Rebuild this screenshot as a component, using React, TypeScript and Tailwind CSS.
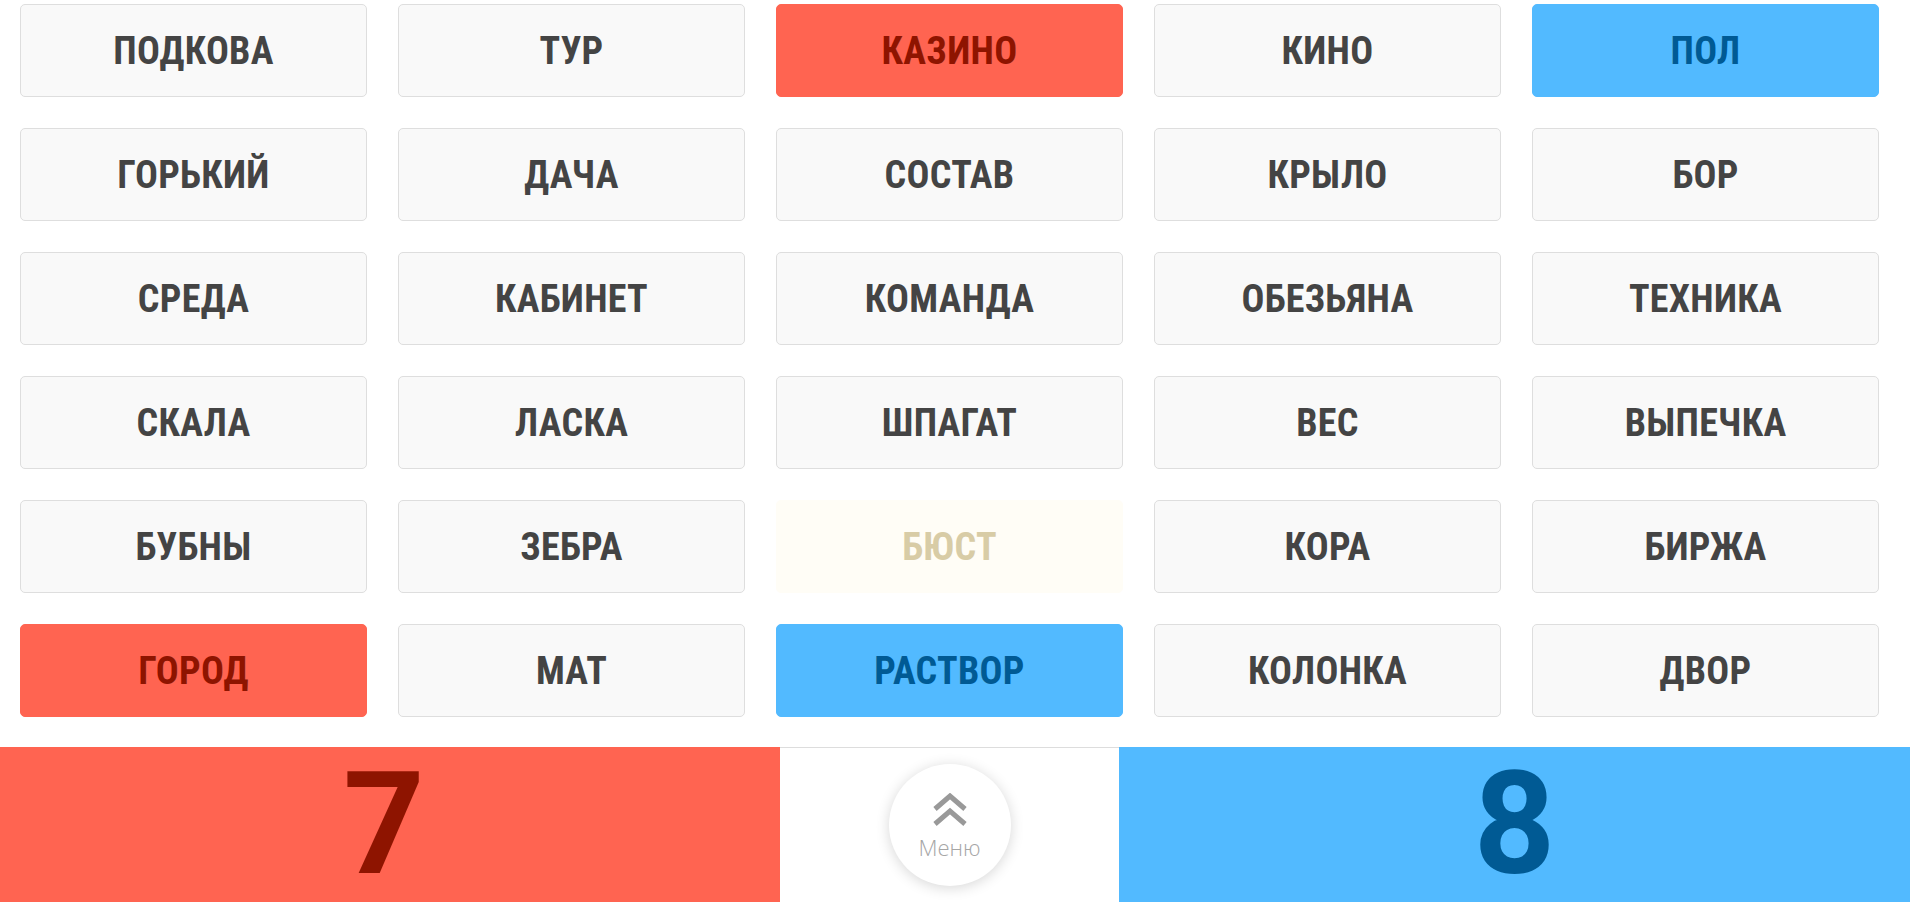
type Tone = 'plain' | 'red' | 'blue' | 'beige';

interface Word {
  text: string;
  tone: Tone;
}

const words: Word[] = [
  { text: 'ПОДКОВА', tone: 'plain' },
  { text: 'ТУР', tone: 'plain' },
  { text: 'КАЗИНО', tone: 'red' },
  { text: 'КИНО', tone: 'plain' },
  { text: 'ПОЛ', tone: 'blue' },
  { text: 'ГОРЬКИЙ', tone: 'plain' },
  { text: 'ДАЧА', tone: 'plain' },
  { text: 'СОСТАВ', tone: 'plain' },
  { text: 'КРЫЛО', tone: 'plain' },
  { text: 'БОР', tone: 'plain' },
  { text: 'СРЕДА', tone: 'plain' },
  { text: 'КАБИНЕТ', tone: 'plain' },
  { text: 'КОМАНДА', tone: 'plain' },
  { text: 'ОБЕЗЬЯНА', tone: 'plain' },
  { text: 'ТЕХНИКА', tone: 'plain' },
  { text: 'СКАЛА', tone: 'plain' },
  { text: 'ЛАСКА', tone: 'plain' },
  { text: 'ШПАГАТ', tone: 'plain' },
  { text: 'ВЕС', tone: 'plain' },
  { text: 'ВЫПЕЧКА', tone: 'plain' },
  { text: 'БУБНЫ', tone: 'plain' },
  { text: 'ЗЕБРА', tone: 'plain' },
  { text: 'БЮСТ', tone: 'beige' },
  { text: 'КОРА', tone: 'plain' },
  { text: 'БИРЖА', tone: 'plain' },
  { text: 'ГОРОД', tone: 'red' },
  { text: 'МАТ', tone: 'plain' },
  { text: 'РАСТВОР', tone: 'blue' },
  { text: 'КОЛОНКА', tone: 'plain' },
  { text: 'ДВОР', tone: 'plain' },
];

const toneClass: Record<Tone, string> = {
  plain: 'bg-[#f9f9f9] border-[#dedede] text-[#444444]',
  red: 'bg-[#ff6451] border-[#ff6451] text-[#8e1400]',
  blue: 'bg-[#52baff] border-[#52baff] text-[#005a94]',
  beige: 'bg-[#fffdf6] border-[#fffdf6] text-[#d8cca6]',
};

function Card({ word }: { word: Word }) {
  return (
    <button
      className={`h-[93px] w-full rounded-[5px] border flex items-center justify-center text-[38px] font-bold font-stretch-condensed tracking-[0.3px] leading-none ${toneClass[word.tone]}`}
      style={{ fontFamily: '"Roboto Condensed", Roboto, "Liberation Sans", sans-serif' }}
    >
      {word.text}
    </button>
  );
}

function MenuButton() {
  return (
    <button className="w-[122px] h-[122px] rounded-full bg-white shadow-[0_2px_14px_rgba(0,0,0,0.16)] flex flex-col items-center justify-center">
      <svg width="36" height="34" viewBox="0 0 36 34" fill="none" stroke="#999999" strokeWidth="5" strokeLinecap="butt" strokeLinejoin="miter" className="mt-[6px]">
        <polyline points="3,16 18,3 33,16" />
        <polyline points="3,31 18,18 33,31" />
      </svg>
      <span
        className="text-[22px] font-light text-[#a6a6a6] leading-none mt-[9px] mb-[6px]"
        style={{ fontFamily: '"Open Sans", Roboto, sans-serif' }}
      >
        Меню
      </span>
    </button>
  );
}

export default function App() {
  return (
    <div className="w-[1910px] h-[902px] bg-white flex flex-col overflow-hidden">
      <div className="h-[747px] pt-[4px] pl-[20px]">
        <div className="grid grid-cols-[repeat(5,347px)] gap-x-[31px] gap-y-[31px]">
          {words.map((w) => (
            <Card key={w.text} word={w} />
          ))}
        </div>
      </div>

      {/* Счёт */}
      <div className="h-[155px] flex">
        <div className="w-[780px] bg-[#ff6451] flex items-center justify-center">
          <span className="text-[142px] font-bold leading-[150px] text-[#8e1400] mr-[12px]" style={{ fontFamily: 'Roboto, sans-serif' }}>
            7
          </span>
        </div>
        <div className="w-[339px] border-t border-[#dddddd] flex items-center justify-center">
          <MenuButton />
        </div>
        <div className="flex-1 bg-[#52baff] flex items-center justify-center">
          <span className="text-[142px] font-bold leading-[150px] text-[#005a94]" style={{ fontFamily: 'Roboto, sans-serif' }}>
            8
          </span>
        </div>
      </div>
    </div>
  );
}
